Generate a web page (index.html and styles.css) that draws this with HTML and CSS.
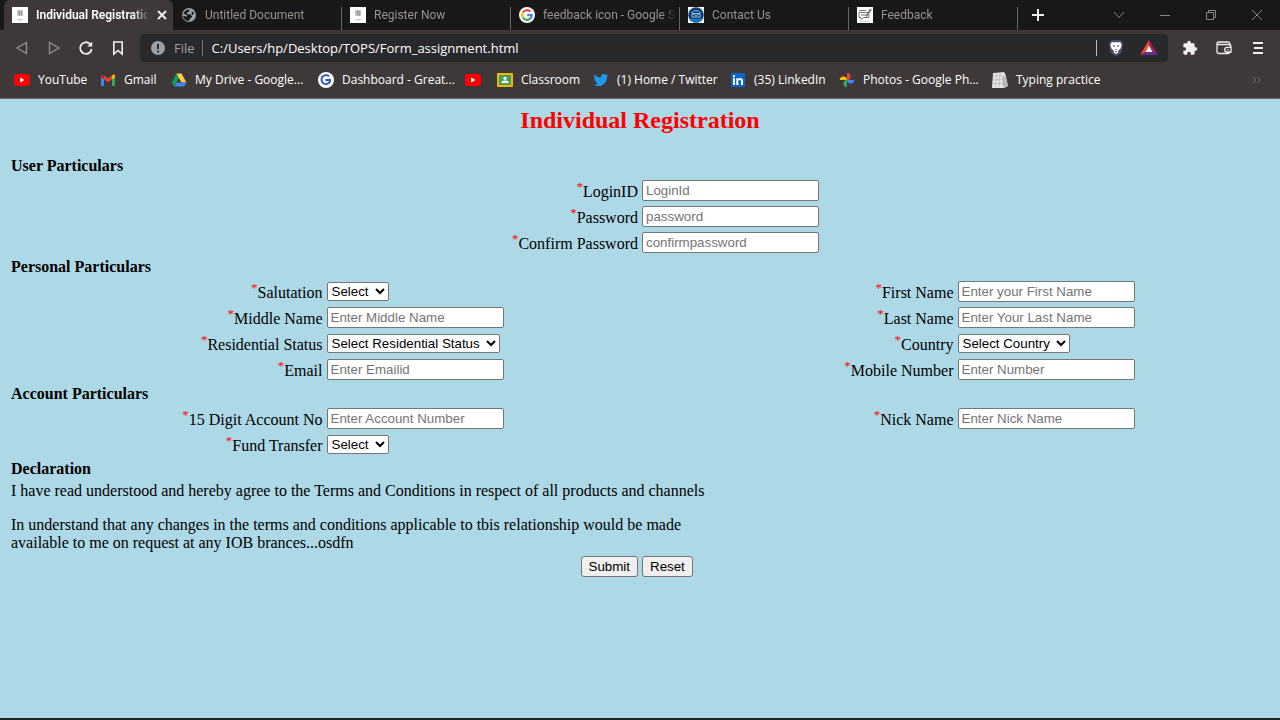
FILE: index.html
```html
<!DOCTYPE html>
<html lang="en">
<head>
<meta charset="utf-8">
<title>Individual Registration</title>
<link rel="stylesheet" href="styles.css">
</head>
<body>
<svg class="defs" aria-hidden="true">
  <symbol id="i-doc" viewBox="0 0 16 16"><path fill="#fff" d="M0 0h16v16H0z"/><path fill="#ccc" d="M5 3h6v6H5z"/><path d="M5.500 5h5M6 7h5M7.500 3v6M9.500 4v5" stroke="#888" stroke-width=".6"/><path fill="#ccc" d="M5 12h6v1H5zM6.500 13.500h3v.7h-3z"/></symbol>
  <symbol id="i-globe" viewBox="0 0 16 16"><circle cx="8" cy="8" r="7" fill="#9aa0a6"/><path fill="#1b1919" d="M3 5.500C4 3.800 6 2.500 8.500 2.500L8 4.800l-2 .8v1.600h3.500l1.600 2.200-.8 1.600-1.500.5L8 14c-3.500 0-5.800-2.400-6-5.500l3.500 1.200 1-.8L5 7.500 2.500 7zM11 4l2 2.300L12 8l-1.500-1z"/></symbol>
  <symbol id="i-google" viewBox="0 0 16 16"><circle cx="8" cy="8" r="8" fill="#fff"/><g fill="none" stroke-width="2.200"><path stroke="#ea4335" d="M3.900 5.500A4.800 4.800 0 0 1 11.300 4.500"/><path stroke="#fbbc05" d="M3.900 5.500a4.800 4.800 0 0 0 0 5"/><path stroke="#34a853" d="M3.900 10.500a4.800 4.800 0 0 0 7.200 1.200"/><path stroke="#4285f4" d="M11.100 11.700A4.800 4.800 0 0 0 12.700 8.200H8.200"/></g></symbol>
  <symbol id="i-contact" viewBox="0 0 16 16"><path fill="#fff" d="M0 0h16v16H0z"/><circle cx="8" cy="8" r="7.800" fill="#0d3f7a"/><path fill="#1d78bd" d="M1 11a7.600 7.600 0 0 0 14 0L8 12z"/><path fill="none" stroke="#8fb9dd" d="M3.500 6C5 3 11 3 12.500 6M4 6.500h8V10H4zM4 6.500L8 8.500l4-2"/></symbol>
  <symbol id="i-feedback" viewBox="0 0 16 16"><path fill="#fff" d="M0 0h16v16H0z"/><path fill="none" stroke="#777" d="M11 5.500H2v5h2v2l2.500-2H12V7M4 8h5M2 3.500h7"/><path d="M14 2L9 9.500" stroke="#777" stroke-width="2"/><path d="M3 14.500h9" stroke="#ccc"/></symbol>
  <symbol id="i-yt" viewBox="0 0 16 16"><rect y="2" width="16" height="12" rx="3" fill="#f00"/><path fill="#fff" d="M6.200 5.500v5L10.500 8z"/></symbol>
  <symbol id="i-gmail" viewBox="0 0 16 16"><path fill="#4285f4" d="M1 4.500l3 2.200V14H2a1 1 0 0 1-1-1z"/><path fill="#34a853" d="M15 4.500l-3 2.200V14h2a1 1 0 0 0 1-1z"/><path fill="#ea4335" d="M4 3.500l4 3 4-3v3.800l-4 3-4-3z"/><path fill="#c5221f" d="M1 4c0-1.700 1.500-2 3-.5v3.800L1 5.200z"/><path fill="#fbbc04" d="M15 4c0-1.700-1.500-2-3-.5v3.800l3-2.100z"/></symbol>
  <symbol id="i-drive" viewBox="0 0 16 16"><path fill="#0f9d58" d="M5.500 1.500L.7 10.500 3.200 14.500 8 6z"/><path fill="#ffcf48" d="M5.500 1.500h5l4.900 9h-5z"/><path fill="#4285f4" d="M5.700 10.500h9.700l-2.500 4H3.200z"/></symbol>
  <symbol id="i-great" viewBox="0 0 16 16"><circle cx="8" cy="8" r="8" fill="#fff"/><path fill="none" stroke="#2556c4" stroke-width="1.900" d="M11 4.300A4.500 4.500 0 1 0 12 9.500V8H7.500"/></symbol>
  <symbol id="i-class" viewBox="0 0 16 16"><rect y="1" width="16" height="14" rx="1" fill="#f4b400"/><path fill="#449d5c" d="M2 3h12v10H2z"/><circle cx="8" cy="6.300" r="1.600" fill="#fff"/><path fill="#fff" d="M4.500 11V9.700c1.800-1.600 5.200-1.600 7 0V11z"/></symbol>
  <symbol id="i-twitter" viewBox="-1 -1 26 26"><path fill="#1d9bf0" d="M23.950 4.570a10 10 0 0 1-2.820.770 4.960 4.960 0 0 0 2.160-2.720c-.95.550-2 .95-3.130 1.180a4.920 4.920 0 0 0-8.380 4.480C7.690 8.090 4.070 6.130 1.640 3.160a4.820 4.820 0 0 0-.67 2.480c0 1.710.87 3.210 2.190 4.100a4.900 4.900 0 0 1-2.230-.62v.06a4.920 4.920 0 0 0 3.950 4.830 5 5 0 0 1-2.210.08 4.940 4.940 0 0 0 4.600 3.420A9.870 9.870 0 0 1 0 19.540a14 14 0 0 0 7.550 2.210c9.050 0 14-7.500 14-13.980v-.64a9.940 9.940 0 0 0 2.400-2.560z"/></symbol>
  <symbol id="i-in" viewBox="0 0 16 16"><rect x="1" y="1" width="14" height="14" rx="1" fill="#0a66c2"/><path fill="#fff" d="M3 6.300h2V13H3zM3 3.200h2v2H3zM6.300 6.300h1.900v.9c1-1.700 4.800-1.600 4.800 1.800v4h-2V9.500c0-2-2.700-1.900-2.700 0V13h-2z"/></symbol>
  <symbol id="i-photos" viewBox="0 0 16 16"><path fill="#ea4335" d="M8 .8a3.600 3.600 0 0 1 0 7.200z"/><path fill="#4285f4" d="M15.200 8A3.600 3.600 0 0 1 8 8z"/><path fill="#34a853" d="M8 15.200A3.600 3.600 0 0 1 8 8z"/><path fill="#fbbc04" d="M.8 8A3.600 3.600 0 0 1 8 8z"/></symbol>
  <symbol id="i-typing" viewBox="0 0 16 16"><path fill="#e4e4e2" d="M1 1l12-1 3 14-4 2H0z"/><path fill="#b5b5b3" d="M10 5l3-1 3 10-5 1z"/><path stroke="#b0b0ae" stroke-width=".6" d="M1 4.500l11-1M1 8l9-.5M1 11.500h9M4.500 1L3.500 15M8 1L7 15"/><path fill="#3e3938" d="M12 0h2v3z"/></symbol>
</svg>

<header class="browser">
  <div class="tabs">
    <div class="tab tab-active"><svg class="ico"><use href="#i-doc"/></svg><span class="tab-title">Individual Registration</span><button class="tab-close" aria-label="Close tab"><svg viewBox="0 0 10 10"><path d="M1 1l8 8M9 1L1 9"/></svg></button></div>
    <div class="tab"><svg class="ico"><use href="#i-globe"/></svg><span class="tab-title">Untitled Document</span></div>
    <div class="tab"><svg class="ico"><use href="#i-doc"/></svg><span class="tab-title">Register Now</span></div>
    <div class="tab"><svg class="ico"><use href="#i-google"/></svg><span class="tab-title">feedback icon - Google S</span></div>
    <div class="tab"><svg class="ico"><use href="#i-contact"/></svg><span class="tab-title">Contact Us</span></div>
    <div class="tab"><svg class="ico"><use href="#i-feedback"/></svg><span class="tab-title">Feedback</span></div>
    <button class="new-tab" aria-label="New tab"><svg viewBox="0 0 12 12"><path d="M6 0v12M0 6h12"/></svg></button>
    <div class="window-buttons">
      <button aria-label="Search tabs"><svg viewBox="0 0 12 12"><path d="M1 3l5 5.500L11 3"/></svg></button>
      <button aria-label="Minimize"><svg viewBox="0 0 12 12"><path d="M1 6.500h10"/></svg></button>
      <button aria-label="Restore"><svg viewBox="0 0 12 12"><path d="M1.500 3.500h7v7h-7zM3.500 3.500v-2h7v7h-2"/></svg></button>
      <button aria-label="Close"><svg viewBox="0 0 12 12"><path d="M1 1l10 10M11 1L1 11"/></svg></button>
    </div>
  </div>

  <div class="toolbar">
    <div class="nav">
      <button class="dim" aria-label="Back"><svg viewBox="0 0 16 16"><path d="M12.500 2.500v11L3 8z"/></svg></button>
      <button class="dim" aria-label="Forward"><svg viewBox="0 0 16 16"><path d="M3.500 2.500v11L13 8z"/></svg></button>
      <button aria-label="Reload"><svg viewBox="0 0 16 16"><path stroke-width="1.800" d="M13.700 9A5.800 5.800 0 1 1 12 3.900"/><path fill="#eee" stroke="none" d="M14.200 1.500v5H9.200z"/></svg></button>
      <button aria-label="Bookmark"><svg viewBox="0 0 16 16"><path stroke-width="1.600" d="M3.800 2h8.400v12L8 10.500 3.800 14z"/></svg></button>
    </div>
    <div class="address">
      <svg class="info" viewBox="0 0 14 14"><circle cx="7" cy="7" r="7" fill="#9aa0a6"/><path d="M7 3v5M7 9.500v2" stroke="#29292b" stroke-width="2"/></svg>
      <span class="scheme">File</span>
      <input class="url" aria-label="Address" value="C:/Users/hp/Desktop/TOPS/Form_assignment.html">
      <span class="bar"></span>
      <button aria-label="Shields"><svg class="lion" viewBox="0 0 16 18"><g stroke="none"><path fill="#4a4b64" d="M3.500 1h9L15 4l-1 8c-.5 2-3.500 4-6 5.500C5.500 16 2.500 14 2 12L1 4z"/><path fill="#fff" d="M4 3l2 .5L8 3l2 .5 2-.5 1.700 2.500-1 4L10 12l.5 1.500L8 15l-2.500-1.500L6 12 3.300 9.500l-1-4z"/><path fill="#4a4b64" d="M4.500 6l2.500.8-.7 1.500zM11.500 6L9 6.800l.7 1.500zM7 10h2l-1 1.300zM6.500 12.500L8 12l1.500.5L8 13.500z"/></g></svg></button>
      <button aria-label="Rewards"><svg class="bat" viewBox="0 0 18 16"><g stroke="none"><path fill="#ff4724" d="M9 0L0 15l5.500-3L9 5.500z"/><path fill="#9e1f63" d="M9 0l9 15-5.500-3L9 5.500z"/><path fill="#662d91" d="M0 15h18l-5.500-3h-7z"/><path fill="#fff" d="M9 5.500L5.500 12h7z"/></g></svg></button>
    </div>
    <div class="tools">
      <button aria-label="Extensions"><svg viewBox="0 0 24 24"><path fill="#eee" stroke="none" d="M20.500 11H19V7a2 2 0 0 0-2-2h-4V3.500a2.500 2.500 0 0 0-5 0V5H4a2 2 0 0 0-2 2v3.800h1.500a2.700 2.700 0 0 1 0 5.400H2V20a2 2 0 0 0 2 2h3.800v-1.500a2.700 2.700 0 0 1 5.400 0V22H17a2 2 0 0 0 2-2v-4h1.500a2.500 2.500 0 0 0 0-5z"/></svg></button>
      <button aria-label="Wallet"><svg viewBox="0 0 16 16"><path stroke-width="1.300" d="M14 5V4a2 2 0 0 0-2-2H3a2 2 0 0 0-2 2v7.500a2 2 0 0 0 2 2h9a2 2 0 0 0 2-1.500M1 4.500h11.500a2.500 2.500 0 0 1 2.500 2.500v5h-4a2.300 2.300 0 0 1 0-4.600h4M11 9.700h1.500"/></svg></button>
      <button aria-label="Menu"><svg viewBox="0 0 16 16"><path stroke-width="2" d="M3 3h10M4 8h9M3 13h10"/></svg></button>
    </div>
  </div>

  <nav class="bookmarks" aria-label="Bookmarks">
    <a href="#"><svg class="ico"><use href="#i-yt"/></svg>YouTube</a>
    <a href="#"><svg class="ico"><use href="#i-gmail"/></svg>Gmail</a>
    <a href="#"><svg class="ico"><use href="#i-drive"/></svg>My Drive - Google...</a>
    <a href="#"><svg class="ico"><use href="#i-great"/></svg>Dashboard - Great...</a>
    <a href="#" aria-label="YouTube"><svg class="ico"><use href="#i-yt"/></svg></a>
    <a href="#"><svg class="ico"><use href="#i-class"/></svg>Classroom</a>
    <a href="#"><svg class="ico"><use href="#i-twitter"/></svg>(1) Home / Twitter</a>
    <a href="#"><svg class="ico"><use href="#i-in"/></svg>(35) LinkedIn</a>
    <a href="#"><svg class="ico"><use href="#i-photos"/></svg>Photos - Google Ph...</a>
    <a href="#"><svg class="ico"><use href="#i-typing"/></svg>Typing practice</a>
    <button class="more" aria-label="More bookmarks"><svg viewBox="0 0 10 10"><path d="M1 2l3 3-3 3M5.500 2l3 3-3 3"/></svg></button>
  </nav>
</header>

<main class="page">
  <h1>Individual Registration</h1>
  <form class="form">
    <h2>User Particulars</h2>
    <label class="mid" for="login"><span><sup>*</sup>LoginID</span></label><input id="login" type="text" placeholder="LoginId">
    <label class="mid" for="pass"><span><sup>*</sup>Password</span></label><input id="pass" type="password" placeholder="password">
    <label class="mid" for="confirm"><span><sup>*</sup>Confirm Password</span></label><input id="confirm" type="password" placeholder="confirmpassword">

    <h2>Personal Particulars</h2>
    <label class="left" for="salutation"><span><sup>*</sup>Salutation</span></label><select id="salutation"><option>Select</option></select>
    <label for="first"><span><sup>*</sup>First Name</span></label><input id="first" type="text" placeholder="Enter your First Name">
    <label class="left" for="middle"><span><sup>*</sup>Middle Name</span></label><input id="middle" type="text" placeholder="Enter Middle Name">
    <label for="last"><span><sup>*</sup>Last Name</span></label><input id="last" type="text" placeholder="Enter Your Last Name">
    <label class="left" for="status"><span><sup>*</sup>Residential Status</span></label><select id="status"><option>Select Residential Status</option></select>
    <label for="country"><span><sup>*</sup>Country</span></label><select id="country"><option>Select Country</option></select>
    <label class="left" for="email"><span><sup>*</sup>Email</span></label><input id="email" type="text" placeholder="Enter Emailid">
    <label for="mobile"><span><sup>*</sup>Mobile Number</span></label><input id="mobile" type="text" placeholder="Enter Number">

    <h2>Account Particulars</h2>
    <label class="left" for="account"><span><sup>*</sup>15 Digit Account No</span></label><input id="account" type="text" placeholder="Enter Account Number">
    <label for="nick"><span><sup>*</sup>Nick Name</span></label><input id="nick" type="text" placeholder="Enter Nick Name">
    <label class="left" for="fund"><span><sup>*</sup>Fund Transfer</span></label><select id="fund"><option>Select</option></select>

    <h2>Declaration</h2>
    <div class="declaration">
      <p>I have read understood and hereby agree to the Terms and Conditions in respect of all products and channels</p>
      <p>In understand that any changes in the terms and conditions applicable to tbis relationship would be made<br>available to me on request at any IOB brances...osdfn</p>
    </div>
    <button class="submit" type="submit">Submit</button>
    <button class="reset" type="reset">Reset</button>
  </form>
</main>
</body>
</html>
```
FILE: styles.css
```css
* { box-sizing: border-box; }

body {
  margin: 0;
  min-height: 100vh;
  display: flex;
  flex-direction: column;
  background: #add8e6;
  border-bottom: 2px solid #222;
  color: #000;
  font: 16px/18px "Liberation Serif", serif;
}

.defs { display: none; }

/* Browser chrome */
.browser {
  background: #3e3938;
  color: #fff;
  font: 12px/16px "Open Sans", sans-serif;
  border-bottom: 1px solid #6a6665;
}
.browser button {
  display: flex;
  align-items: center;
  justify-content: center;
  padding: 0;
  border: 0;
  background: none;
}
.browser button svg { fill: none; stroke: #eee; }
.ico { width: 16px; height: 16px; flex: none; }

.tabs {
  display: flex;
  height: 30px;
  padding-left: 4px;
  background: #191717;
  font-family: Roboto, sans-serif;
}
.tab {
  position: relative;
  display: flex;
  align-items: center;
  gap: 8px;
  flex: 0 1 169px;
  min-width: 0;
  padding: 0 3px 0 8px;
  color: #989390;
}
.tab:not(.tab-active)::after {
  content: "";
  position: absolute;
  right: 0;
  top: 7px;
  bottom: 0;
  width: 1px;
  background: #666;
}
.tab-active {
  padding-right: 6px;
  background: #3e3938;
  border-radius: 6px 6px 0 0;
  color: #fff;
  font-weight: 600;
}
.tab-title {
  flex: 1;
  overflow: hidden;
  white-space: nowrap;
  -webkit-mask-image: linear-gradient(to left, transparent, #000 16px);
  mask-image: linear-gradient(to left, transparent, #000 16px);
}
.tab-close svg { width: 10px; height: 10px; stroke-width: 2; }
.new-tab { width: 40px; }
.new-tab svg { width: 12px; height: 12px; stroke-width: 2; }
.window-buttons { display: flex; margin-left: auto; }
.window-buttons button { width: 46px; }
.browser .window-buttons svg { width: 12px; height: 12px; stroke: #8a8684; }

.toolbar {
  display: flex;
  align-items: center;
  height: 36px;
}
.toolbar svg { width: 16px; height: 16px; }
.nav { display: flex; padding-left: 6px; width: 140px; }
.nav button { width: 32px; height: 28px; }
.browser .dim svg { stroke: #8f8b89; stroke-width: 1.4; }
.address {
  flex: 1;
  display: flex;
  align-items: center;
  height: 28px;
  padding: 0 10px;
  border-radius: 4px;
  background: #29292b;
  font-size: 13px;
}
.address .info { width: 14px; height: 14px; margin: 0 9px 0 1px; }
.scheme {
  padding-right: 7px;
  border-right: 1px solid #77777a;
  color: #9aa0a6;
}
.url {
  flex: 1;
  min-width: 0;
  padding: 0 9px;
  border: 0;
  background: none;
  color: #fff;
  font: inherit;
}
.bar { width: 1px; height: 16px; background: #bbb; margin-right: 11px; }
.address button + button { margin-left: 16px; }
.address .lion { width: 16px; height: 18px; }
.address .bat { width: 18px; height: 16px; }
.tools { display: flex; padding: 0 5px; }
.tools button { width: 34px; height: 28px; }

.bookmarks {
  display: grid;
  grid-template-columns: 86px 71px 147px 147px 32px 96px 137px 109px 153px 1fr auto;
  align-items: center;
  padding: 6px 18px 10px 14px;
}
.bookmarks a {
  display: flex;
  align-items: center;
  gap: 8px;
  white-space: nowrap;
  color: #fff;
  text-decoration: none;
}
.more svg { width: 10px; height: 10px; }
.browser .more svg { stroke: #77777a; }

/* Registration form */
.page { padding: 8px 11px; }
h1 {
  margin: 0 0 21px;
  color: #f00;
  font-size: 24px;
  line-height: 27px;
  text-align: center;
}
.form {
  display: grid;
  grid-template-columns: repeat(4, 1fr);
  grid-auto-rows: minmax(21px, auto);
  column-gap: 4px;
  row-gap: 2px;
  align-items: center;
}
h2 {
  grid-column: 1 / -1;
  margin: 0;
  font-size: 16px;
  line-height: 21px;
}
label {
  display: flex;
  align-items: center;
  justify-content: flex-end;
  height: 24px;
}
.left { grid-column: 1; }
.mid { grid-column: 2; }
sup { color: #f00; font-size: 13px; line-height: 18px; }
.form input,
.form select,
.form button {
  border: 1px solid #767676;
  border-radius: 2px;
  background: #fff;
  color: #000;
  font-family: "Liberation Sans", sans-serif;
}
.form input {
  width: 177px;
  height: 21px;
  padding: 1px 3px;
}
.form input::placeholder { color: #757575; }
.form select {
  justify-self: start;
  height: 19px;
  padding-right: 2px;
}
.form button {
  height: 21px;
  padding: 1px 7px;
  border-radius: 3px;
  background: #efefef;
}
.declaration { grid-column: 1 / 4; padding: 1px 0 2px; }
.declaration p { margin: 0 0 16px; }
.declaration p:last-child { margin: 0; }
.submit { grid-column: 2; justify-self: end; }
.reset { grid-column: 3; justify-self: start; }
```
